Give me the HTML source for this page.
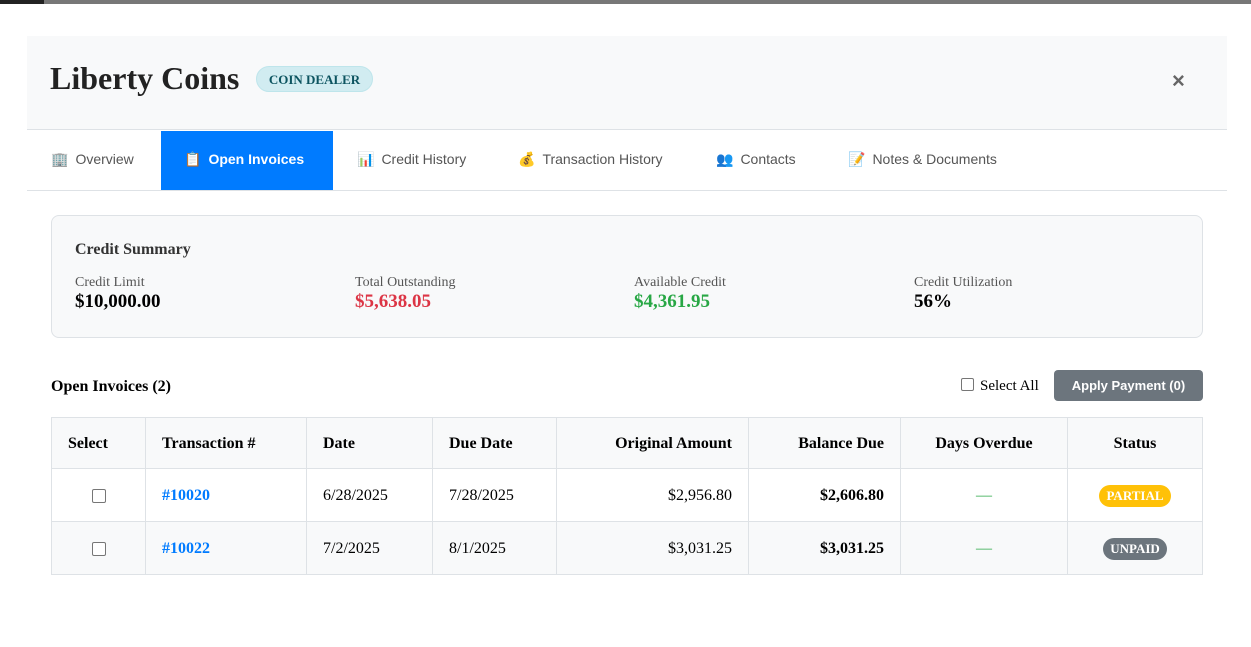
<!DOCTYPE html>
<html><head><meta charset="utf-8"><style>
*{box-sizing:border-box;margin:0;padding:0}
body{width:1251px;height:647px;background:#fff;position:relative;overflow:hidden;font-family:"Liberation Serif",serif;color:#000}
.abs{position:absolute}
.sans{font-family:"Liberation Sans",sans-serif}
table{border-collapse:collapse;position:absolute;left:51px;top:417px;width:1152px}
td,th{border:1px solid #dee2e6;font-size:16px;padding:0 16px}
th{height:51px;background:#f8f9fa;text-align:left;font-weight:bold;padding-top:2px}
td{height:53px;padding-top:1px}
tr.alt td{background:#f8f9fa}
.r{text-align:right}.c{text-align:center}
.cb{display:inline-block;width:14px;height:14px;border:1px solid #767676;border-radius:2px;background:#fff;vertical-align:middle}
.badge{display:inline-block;border-radius:12px;color:#fff;font-weight:bold;font-size:13px;padding:3px 7px;line-height:16px}
.tab{position:absolute;top:131px;height:59px;line-height:57px;font-size:14px;color:#555;font-family:"Liberation Sans",sans-serif}
.tab i{font-style:normal;margin-right:7px}
.lbl{font-size:14px;color:#555;position:absolute;top:275px}
.val{font-size:19px;font-weight:bold;position:absolute;top:291px}
</style></head><body>
<div class="abs" style="left:0;top:0;width:44px;height:4px;background:#222"></div>
<div class="abs" style="left:44px;top:0;width:1207px;height:4px;background:#777"></div>
<div class="abs" style="left:27px;top:36px;width:1200px;height:94px;background:#f8f9fa;border-bottom:1px solid #dee2e6"></div>
<div class="abs" style="left:50px;top:60px;font-size:32px;font-weight:bold;color:#222">Liberty Coins</div>
<div class="abs" style="left:256px;top:66px;width:117px;height:26px;border-radius:13px;background:#d1ecf1;border:1px solid #bee5eb;color:#0c5460;font-size:13px;font-weight:bold;text-align:center;line-height:25px">COIN DEALER</div>
<div class="abs sans" style="left:1172px;top:68px;font-size:22px;font-weight:bold;color:#666">×</div>
<div class="abs" style="left:27px;top:190px;width:1200px;height:1px;background:#dee2e6"></div>
<div class="tab" style="left:51px"><i>🏢</i>Overview</div>
<div class="tab" style="left:161px;width:172px;background:#007bff;color:#fff;font-weight:bold;padding-left:23px"><i>📋</i>Open Invoices</div>
<div class="tab" style="left:357px"><i>📊</i>Credit History</div>
<div class="tab" style="left:518px"><i>💰</i>Transaction History</div>
<div class="tab" style="left:716px"><i>👥</i>Contacts</div>
<div class="tab" style="left:848px"><i>📝</i>Notes &amp; Documents</div>
<div class="abs" style="left:51px;top:215px;width:1152px;height:123px;background:#f8f9fa;border:1px solid #dee2e6;border-radius:8px"></div>
<div class="abs" style="left:75px;top:241px;font-size:16px;font-weight:bold;color:#333">Credit Summary</div>
<div class="lbl" style="left:75px">Credit Limit</div><div class="val" style="left:75px">$10,000.00</div>
<div class="lbl" style="left:355px">Total Outstanding</div><div class="val" style="left:355px;color:#dc3545">$5,638.05</div>
<div class="lbl" style="left:634px">Available Credit</div><div class="val" style="left:634px;color:#28a745">$4,361.95</div>
<div class="lbl" style="left:914px">Credit Utilization</div><div class="val" style="left:914px">56%</div>
<div class="abs" style="left:51px;top:378px;font-size:16px;font-weight:bold">Open Invoices (2)</div>
<div class="abs" style="left:961px;top:378px;font-size:15px"><span class="cb" style="width:13px;height:13px;margin-right:6px;vertical-align:-1px"></span>Select All</div>
<div class="abs sans" style="left:1054px;top:370px;width:149px;height:31px;background:#6c757d;border-radius:4px;color:#fff;font-size:13px;font-weight:bold;text-align:center;line-height:31px">Apply Payment (0)</div>
<table>
<tr><th style="width:94px">Select</th><th style="width:161px">Transaction #</th><th style="width:126px">Date</th><th style="width:124px">Due Date</th><th class="r" style="width:192px">Original Amount</th><th class="r" style="width:152px">Balance Due</th><th class="c" style="width:167px">Days Overdue</th><th class="c">Status</th></tr>
<tr><td class="c"><span class="cb"></span></td><td style="color:#007bff;font-weight:bold">#10020</td><td>6/28/2025</td><td>7/28/2025</td><td class="r">$2,956.80</td><td class="r"><b>$2,606.80</b></td><td class="c" style="color:#28a745">—</td><td class="c"><span class="badge" style="background:#ffc107">PARTIAL</span></td></tr>
<tr class="alt"><td class="c"><span class="cb"></span></td><td style="color:#007bff;font-weight:bold">#10022</td><td>7/2/2025</td><td>8/1/2025</td><td class="r">$3,031.25</td><td class="r"><b>$3,031.25</b></td><td class="c" style="color:#28a745">—</td><td class="c"><span class="badge" style="background:#6c757d">UNPAID</span></td></tr>
</table>
</body></html>
